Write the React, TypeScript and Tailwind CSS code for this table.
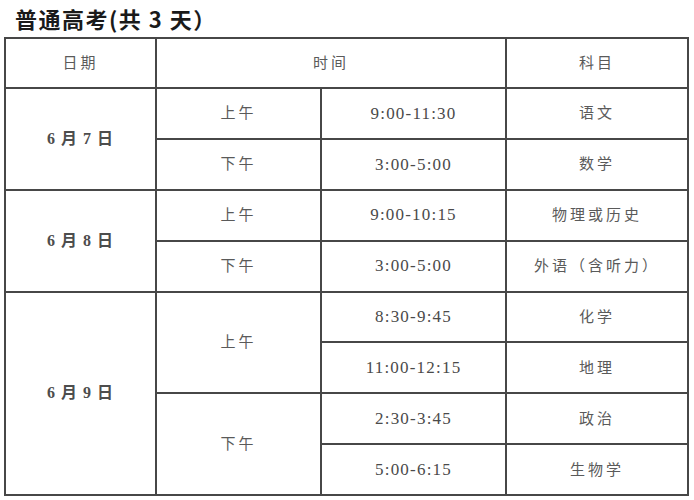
import React from 'react';

const cjk = "font-['Liberation_Serif','Noto_Sans_CJK_SC',serif]";

type Slot = { time: string; subject: string };
type Half = { label: string; slots: Slot[] };
type Day = { date: string; halves: Half[] };

const days: Day[] = [
  {
    date: '6 月 7 日',
    halves: [
      { label: '上午', slots: [{ time: '9:00-11:30', subject: '语文' }] },
      { label: '下午', slots: [{ time: '3:00-5:00', subject: '数学' }] },
    ],
  },
  {
    date: '6 月 8 日',
    halves: [
      { label: '上午', slots: [{ time: '9:00-10:15', subject: '物理或历史' }] },
      { label: '下午', slots: [{ time: '3:00-5:00', subject: '外语（含听力）' }] },
    ],
  },
  {
    date: '6 月 9 日',
    halves: [
      {
        label: '上午',
        slots: [
          { time: '8:30-9:45', subject: '化学' },
          { time: '11:00-12:15', subject: '地理' },
        ],
      },
      {
        label: '下午',
        slots: [
          { time: '2:30-3:45', subject: '政治' },
          { time: '5:00-6:15', subject: '生物学' },
        ],
      },
    ],
  },
];

const cell = 'border-2 border-[#474747] text-center align-middle h-[50.9px] p-0';
const head = 'border-2 border-[#474747] text-center align-middle h-[50px] p-0 font-normal';
const zh = 'text-[15px] tracking-[3px] text-[#5a5a5a]';

export default function App() {
  return (
    <div className={`bg-white w-[694px] h-[500px] overflow-hidden ${cjk}`}>
      <div className="h-[37px] pl-[15px] pt-[5px]">
        <h1 className="text-[22px] leading-[26px] font-bold text-[#1a1a1a] tracking-[1.5px] font-['Noto_Sans_CJK_SC',sans-serif]">
          普通高考(共 3 天）
        </h1>
      </div>

      <table className="ml-[4px] border-collapse w-[683px] table-fixed">
        <colgroup>
          <col className="w-[151px]" />
          <col className="w-[165px]" />
          <col className="w-[185px]" />
          <col className="w-[182px]" />
        </colgroup>
        <thead>
          <tr>
            <th className={head}>
              <span className={zh}>日期</span>
            </th>
            <th colSpan={2} className={head}>
              <span className={zh}>时间</span>
            </th>
            <th className={head}>
              <span className={zh}>科目</span>
            </th>
          </tr>
        </thead>
        <tbody>
          {days.map((day) => {
            const dayRows = day.halves.reduce((n, h) => n + h.slots.length, 0);
            return day.halves.map((half, hi) =>
              half.slots.map((slot, si) => (
                <tr key={day.date + half.label + si}>
                  {hi === 0 && si === 0 && (
                    <td rowSpan={dayRows} className={cell}>
                      <span className="text-[16px] font-semibold text-[#4d4d4d] tracking-[1px] whitespace-pre">
                        {day.date}
                      </span>
                    </td>
                  )}
                  {si === 0 && (
                    <td rowSpan={half.slots.length} className={cell}>
                      <span className={zh}>{half.label}</span>
                    </td>
                  )}
                  <td className={cell}>
                    <span className="text-[17px] tracking-[1.2px] text-[#4a4a4a]">{slot.time}</span>
                  </td>
                  <td className={cell}>
                    <span className={zh}>{slot.subject}</span>
                  </td>
                </tr>
              ))
            );
          })}
        </tbody>
      </table>
    </div>
  );
}
